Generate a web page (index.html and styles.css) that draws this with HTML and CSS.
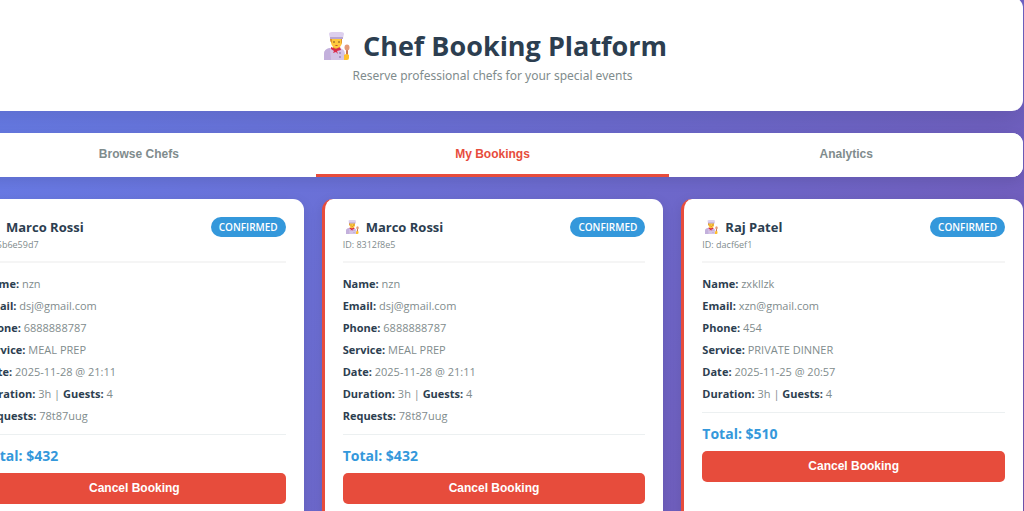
FILE: index.html
```
<!DOCTYPE html>
<html lang="en">
<head>
  <meta charset="UTF-8">
  <meta name="viewport" content="width=device-width, initial-scale=1.0">
  <title>Chef Booking Platform</title>
  <link rel="stylesheet" href="styles.css">
</head>
<body>
  <svg class="sprite" aria-hidden="true">
    <symbol id="chef" viewBox="0 0 26 28">
      <path d="M0 28v-6q0-5 6-6h9q6 1 6 6v6z" fill="#d3c3e6"/>
      <path d="M0 28v-6q0-5 6-6l1 12z" fill="#c3b0dc"/>
      <path d="M9 13h6v5H9z" fill="#e8a22a"/>
      <path d="M7 6h11v5q-1 5-5.500 5T7 11z" fill="#ffc83d"/>
      <path d="M6 6h2v5q-2-1-2-3zM17 6h1v3q0 2-1 3z" fill="#e0962a"/>
      <path d="M6 6L5 2q0-2 3-2h9q3 0 3 2l-1 4z" fill="#ddd0ee"/>
      <path d="M6 5h13v2H6z" fill="#b8a5d2"/>
      <circle cx="10" cy="10" r=".8" fill="#6a3d22"/>
      <circle cx="15" cy="10" r=".8" fill="#6a3d22"/>
      <path d="M11 13h3q-.5 1-1.500 1T11 13z" fill="#c9472f"/>
      <path d="M7 15l5 2 4-2 1 3-4 1 1 3-2-2-3 1 1-2-3-2z" fill="#d92c4b"/>
      <circle cx="16" cy="21" r=".9" fill="#9684b8"/>
      <circle cx="16" cy="25" r=".9" fill="#9684b8"/>
      <path d="M22 17h2v8h-2z" fill="#c87552"/>
      <ellipse cx="23" cy="15.500" rx="2.500" ry="3" fill="#e39a78"/>
      <path d="M20 23q3-2 5 0v3q0 2-2 2h-3z" fill="#ffc02c"/>
    </symbol>
  </svg>

  <div class="container">
    <header class="header">
      <h1><svg class="chef-icon" aria-hidden="true"><use href="#chef"/></svg>Chef Booking Platform</h1>
      <p>Reserve professional chefs for your special events</p>
    </header>

    <nav class="tabs">
      <button class="tab-btn" type="button">Browse Chefs</button>
      <button class="tab-btn active" type="button">My Bookings</button>
      <button class="tab-btn" type="button">Analytics</button>
    </nav>

    <main class="bookings">
      <article class="booking-card">
        <div class="booking-header">
          <div>
            <h3><svg class="chef-icon" aria-hidden="true"><use href="#chef"/></svg>Marco Rossi</h3>
            <p class="booking-id">ID: 5b6e59d7</p>
          </div>
          <span class="status">CONFIRMED</span>
        </div>
        <div class="booking-details">
          <p><strong>Name:</strong> nzn</p>
          <p><strong>Email:</strong> dsj@gmail.com</p>
          <p><strong>Phone:</strong> 6888888787</p>
          <p><strong>Service:</strong> MEAL PREP</p>
          <p><strong>Date:</strong> 2025-11-28 @ 21:11</p>
          <p><strong>Duration:</strong> 3h | <strong>Guests:</strong> 4</p>
          <p><strong>Requests:</strong> 78t87uug</p>
        </div>
        <p class="total">Total: $432</p>
        <button class="cancel-btn" type="button">Cancel Booking</button>
      </article>

      <article class="booking-card">
        <div class="booking-header">
          <div>
            <h3><svg class="chef-icon" aria-hidden="true"><use href="#chef"/></svg>Marco Rossi</h3>
            <p class="booking-id">ID: 8312f8e5</p>
          </div>
          <span class="status">CONFIRMED</span>
        </div>
        <div class="booking-details">
          <p><strong>Name:</strong> nzn</p>
          <p><strong>Email:</strong> dsj@gmail.com</p>
          <p><strong>Phone:</strong> 6888888787</p>
          <p><strong>Service:</strong> MEAL PREP</p>
          <p><strong>Date:</strong> 2025-11-28 @ 21:11</p>
          <p><strong>Duration:</strong> 3h | <strong>Guests:</strong> 4</p>
          <p><strong>Requests:</strong> 78t87uug</p>
        </div>
        <p class="total">Total: $432</p>
        <button class="cancel-btn" type="button">Cancel Booking</button>
      </article>

      <article class="booking-card">
        <div class="booking-header">
          <div>
            <h3><svg class="chef-icon" aria-hidden="true"><use href="#chef"/></svg>Raj Patel</h3>
            <p class="booking-id">ID: dacf6ef1</p>
          </div>
          <span class="status">CONFIRMED</span>
        </div>
        <div class="booking-details">
          <p><strong>Name:</strong> zxkllzk</p>
          <p><strong>Email:</strong> xzn@gmail.com</p>
          <p><strong>Phone:</strong> 454</p>
          <p><strong>Service:</strong> PRIVATE DINNER</p>
          <p><strong>Date:</strong> 2025-11-25 @ 20:57</p>
          <p><strong>Duration:</strong> 3h | <strong>Guests:</strong> 4</p>
        </div>
        <p class="total">Total: $510</p>
        <button class="cancel-btn" type="button">Cancel Booking</button>
      </article>
    </main>
  </div>
</body>
</html>
```
FILE: styles.css
```
* {
  margin: 0;
  padding: 0;
  box-sizing: border-box;
}

html {
  overflow: hidden;
}

body {
  font-family: 'Segoe UI', 'Open Sans', 'Noto Sans', sans-serif;
  background: linear-gradient(135deg, #667eea 0%, #764ba2 100%);
  min-height: 180vh;
  overflow: hidden;
}

.sprite {
  display: none;
}

/* the board is scrolled a little to the right */
.container {
  margin: -3px 1px 0 -38px;
}

.header {
  background: white;
  border-radius: 11px;
  padding: 28px 27px 26px;
  margin-bottom: 22px;
  text-align: center;
  box-shadow: 0 9px 27px rgba(0, 0, 0, 0.1);
}

.header h1 {
  display: flex;
  align-items: center;
  justify-content: center;
  gap: 13px;
  padding-left: 6px;
  color: #2c3e50;
  font-size: 27px;
  line-height: 42px;
}

.header .chef-icon {
  width: 26px;
  height: 28px;
}

.header p {
  color: #7f8c8d;
  font-family: 'Segoe UI', 'Noto Sans', sans-serif;
  font-size: 12px;
  line-height: 18px;
}

.tabs {
  display: flex;
  background: white;
  border-radius: 11px;
  margin-bottom: 22px;
  overflow: hidden;
  box-shadow: 0 4px 13px rgba(0, 0, 0, 0.1);
}

.tab-btn {
  flex: 1;
  padding: 14px 13px 12px;
  border: none;
  border-bottom: 3px solid transparent;
  background: white;
  color: #7f8c8d;
  font: bold 12px/15px Arial, 'Liberation Sans', sans-serif;
  cursor: pointer;
}

.tab-btn.active {
  color: #e74c3c;
  border-bottom-color: #e74c3c;
}

.bookings {
  display: grid;
  grid-template-columns: repeat(3, 1fr);
  gap: 18px;
}

.booking-card {
  background: white;
  border-left: 3px solid #e74c3c;
  border-radius: 11px;
  padding: 18px;
  box-shadow: 0 4px 13px rgba(0, 0, 0, 0.1);
}

.booking-header {
  display: flex;
  justify-content: space-between;
  align-items: flex-start;
  padding-bottom: 8px;
  margin-bottom: 10px;
  border-bottom: 2px solid #f5f5f5;
}

.booking-header h3 {
  display: flex;
  align-items: center;
  gap: 7px;
  padding-left: 3px;
  color: #2c3e50;
  font-size: 13px;
  line-height: 20px;
}

.booking-header .chef-icon {
  width: 13px;
  height: 14px;
}

.booking-id {
  color: #7f8c8d;
  font-size: 9px;
  line-height: 16px;
}

.status {
  background: #3498db;
  color: white;
  padding: 0 8px;
  border-radius: 10px;
  font-size: 10px;
  font-weight: 600;
  line-height: 20px;
}

.booking-details {
  padding-bottom: 7px;
  border-bottom: 1px solid #ecf0f1;
  color: #7f8c8d;
  font-size: 11px;
  line-height: 22px;
}

.booking-details strong {
  color: #2c3e50;
}

.total {
  padding-top: 9px;
  margin-bottom: 5px;
  color: #3498db;
  font-size: 14px;
  font-weight: bold;
  line-height: 24px;
}

.cancel-btn {
  width: 100%;
  padding: 8px;
  border: none;
  border-radius: 5px;
  background: #e74c3c;
  color: white;
  font: bold 12px/15px Arial, 'Liberation Sans', sans-serif;
  cursor: pointer;
}
```
